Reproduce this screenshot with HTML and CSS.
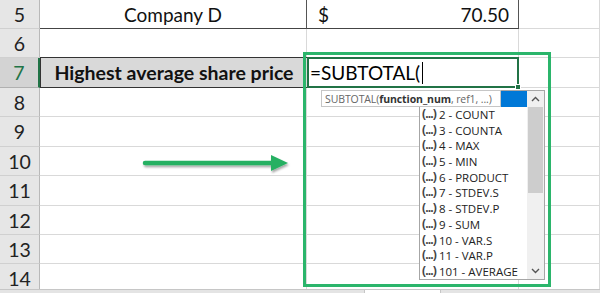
FILE: index.html
```html
<!DOCTYPE html>
<html lang="en">
<head>
  <meta charset="UTF-8">
  <title>SUBTOTAL</title>
  <link rel="stylesheet" href="styles.css">
</head>
<body>
  <div class="page">
    <div class="sheet">
      <div class="rh">5</div>
      <div class="cell a5">Company D</div>
      <div class="cell b5"><span>$</span><span>70.50</span></div>
      <div class="cell"></div>

      <div class="rh">6</div>
      <div class="cell"></div>
      <div class="cell"></div>
      <div class="cell"></div>

      <div class="rh rh-active">7</div>
      <div class="cell a7">Highest average share price</div>
      <div class="cell b7">=SUBTOTAL(<span class="caret"></span><span class="handle"></span></div>
      <div class="cell"></div>

      <div class="rh">8</div>
      <div class="cell"></div>
      <div class="cell"></div>
      <div class="cell"></div>

      <div class="rh">9</div>
      <div class="cell"></div>
      <div class="cell"></div>
      <div class="cell"></div>

      <div class="rh">10</div>
      <div class="cell"></div>
      <div class="cell"></div>
      <div class="cell"></div>

      <div class="rh">11</div>
      <div class="cell"></div>
      <div class="cell"></div>
      <div class="cell"></div>

      <div class="rh">12</div>
      <div class="cell"></div>
      <div class="cell"></div>
      <div class="cell"></div>

      <div class="rh">13</div>
      <div class="cell"></div>
      <div class="cell"></div>
      <div class="cell"></div>

      <div class="rh">14</div>
      <div class="cell"></div>
      <div class="cell"></div>
      <div class="cell"></div>

      <!-- overlays -->
      <div class="highlight"></div>

      <svg class="arrow" width="150" height="24" viewBox="0 0 150 24">
        <defs>
          <filter id="sh" x="-10%" y="-50%" width="120%" height="200%">
            <feDropShadow dx="1" dy="2" stdDeviation="1.2" flood-color="#000" flood-opacity="0.35"/>
          </filter>
        </defs>
        <g filter="url(#sh)">
          <line x1="4" y1="11" x2="132" y2="11" stroke="#27b062" stroke-width="4.5" stroke-linecap="round"/>
          <polygon points="130,3 147,11 130,19" fill="#27b062"/>
        </g>
      </svg>

      <div class="dropdown">
        <div class="list">
          <!-- first entry (1 - AVERAGE) sits behind the tooltip -->
          <div class="item selected"></div>
          <div class="item"><span class="ico">(...)</span>2 - COUNT</div>
          <div class="item"><span class="ico">(...)</span>3 - COUNTA</div>
          <div class="item"><span class="ico">(...)</span>4 - MAX</div>
          <div class="item"><span class="ico">(...)</span>5 - MIN</div>
          <div class="item"><span class="ico">(...)</span>6 - PRODUCT</div>
          <div class="item"><span class="ico">(...)</span>7 - STDEV.S</div>
          <div class="item"><span class="ico">(...)</span>8 - STDEV.P</div>
          <div class="item"><span class="ico">(...)</span>9 - SUM</div>
          <div class="item"><span class="ico">(...)</span>10 - VAR.S</div>
          <div class="item"><span class="ico">(...)</span>11 - VAR.P</div>
          <div class="item"><span class="ico">(...)</span>101 - AVERAGE</div>
        </div>
        <div class="scroll">
          <div class="sbtn">
            <svg width="9" height="6" viewBox="0 0 9 6"><polyline points="1,5 4.5,1.5 8,5" fill="none" stroke="#555" stroke-width="1.4"/></svg>
          </div>
          <div class="thumb"></div>
          <div class="track"></div>
          <div class="sbtn">
            <svg width="9" height="6" viewBox="0 0 9 6"><polyline points="1,1 4.5,4.5 8,1" fill="none" stroke="#555" stroke-width="1.4"/></svg>
          </div>
        </div>
      </div>

      <div class="tip">SUBTOTAL(<b>function_num</b>, ref1, ...)</div>
    </div>

    <div class="tabs">
      <div class="tab-bar"></div>
      <div class="tab-on"></div>
      <div class="tab-bar"></div>
    </div>
  </div>
</body>
</html>
```

FILE: styles.css
```css
* {
  box-sizing: border-box;
}

html, body {
  margin: 0;
  padding: 0;
  background: #fff;
}

.page {
  width: 600px;
  height: 293px;
  overflow: hidden;
  display: flex;
  flex-direction: column;
  font-family: Lato, "Liberation Sans", sans-serif;
}

.sheet {
  position: relative;
  flex: 1;
  overflow: hidden;
  display: grid;
  grid-template-columns: 40px 267px 212px 1fr;
  grid-template-rows: 29px 29px 30px 29px 30px 29px 30px 29px 29px 29px;
}

/* row headers */
.rh {
  background: #e6e6e6;
  border-right: 1px solid #b9b9b9;
  border-bottom: 1px solid #d0d0d0;
  color: #222;
  font-size: 19.5px;
  display: flex;
  align-items: center;
  justify-content: center;
}

.rh-active {
  background: #d3d3d3;
  color: #217346;
  border-right: 2px solid #217346;
  border-bottom-color: #b0b0b0;
}

/* cells */
.cell {
  border-right: 1px solid #d9d9d9;
  border-bottom: 1px solid #d9d9d9;
  font-size: 19px;
  color: #111;
  display: flex;
  align-items: center;
  white-space: nowrap;
}

.a5 {
  justify-content: center;
  border-right-color: #555;
  border-bottom-color: #444;
}

.b5 {
  justify-content: space-between;
  padding: 0 9px 0 11px;
  border-right-color: #555;
  border-bottom-color: #444;
}

.a7 {
  background: #d9d9d9;
  font-weight: bold;
  font-size: 19.5px;
  justify-content: center;
  border: 1px solid #333;
  border-right: none;
  margin-top: -1px;
  height: calc(100% + 1px);
}

.b7 {
  position: relative;
  border: 2px solid #217346;
  margin-top: -1px;
  height: calc(100% + 1px);
  padding-left: 1px;
  font-size: 19px;
  color: #000;
}

.caret {
  display: inline-block;
  width: 1px;
  height: 22px;
  margin-left: 2px;
  background: #000;
}

.handle {
  position: absolute;
  right: -4px;
  bottom: -4px;
  width: 6px;
  height: 6px;
  background: #217346;
  border: 1px solid #fff;
}

/* green annotation box */
.highlight {
  position: absolute;
  left: 303px;
  top: 52px;
  width: 248px;
  height: 235px;
  border: 3px solid #2bb56b;
  z-index: 3;
}

.arrow {
  position: absolute;
  left: 141px;
  top: 152px;
}

/* autocomplete list */
.dropdown {
  position: absolute;
  left: 419px;
  top: 90px;
  width: 126px;
  height: 190px;
  background: #fff;
  border: 1px solid #a6a6a6;
  display: flex;
  font-family: "Open Sans", "Noto Sans", sans-serif;
  z-index: 2;
}

.list {
  flex: 1;
}

.item {
  height: 15.7px;
  display: flex;
  align-items: center;
  font-size: 11.5px;
  color: #222;
  white-space: nowrap;
  padding-left: 2px;
}

.item.selected {
  background: #0078d7;
}

.ico {
  font-size: 12px;
  font-weight: bold;
  color: #444;
  letter-spacing: -0.9px;
  margin-right: 3px;
  position: relative;
  top: -1px;
}

.scroll {
  width: 17px;
  display: flex;
  flex-direction: column;
  background: #f0f0f0;
}

.sbtn {
  height: 16px;
  display: flex;
  align-items: center;
  justify-content: center;
}

.thumb {
  height: 86px;
  margin: 0 1px;
  background: #cdcdcd;
}

.track {
  flex: 1;
}

.tip {
  position: absolute;
  left: 321px;
  top: 90px;
  width: 180px;
  height: 17px;
  background: #fff;
  border: 1px solid #c6c6c6;
  font-family: "Open Sans", "Noto Sans", sans-serif;
  font-size: 10.5px;
  letter-spacing: -0.1px;
  color: #666;
  padding-left: 3px;
  display: flex;
  align-items: center;
  white-space: nowrap;
  overflow: hidden;
  z-index: 2;
}

.tip b {
  color: #333;
  font-weight: bold;
}

/* sheet tab strip */
.tabs {
  height: 4px;
  display: flex;
  border-top: 1px solid #c6c6c6;
}

.tab-bar {
  flex: 1;
  background: #e4e4e4;
}

.tab-bar:first-child {
  flex: 0 0 364px;
}

.tab-on {
  width: 77px;
  background: #fff;
  border-left: 1px solid #c6c6c6;
  border-right: 1px solid #c6c6c6;
}
```
